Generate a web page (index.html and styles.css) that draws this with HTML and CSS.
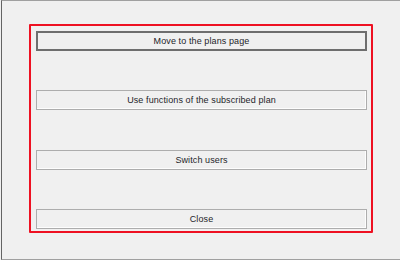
FILE: index.html
```html
<!DOCTYPE html>
<html lang="en">
  <head>
    <meta charset="UTF-8">
    <link rel="stylesheet" href="styles.css">
  </head>
  <body>
    <div class="window">
      <div class="panel">
        <button class="btn btn-default">Move to the plans page</button>
        <button class="btn">Use functions of the subscribed plan</button>
        <button class="btn">Switch users</button>
        <button class="btn">Close</button>
      </div>
    </div>
  </body>
</html>
```
FILE: styles.css
```css
html, body { margin: 0; padding: 0; background: #f0f0f0; }
body { font: 9px/1 "Liberation Sans", Arial, sans-serif; color: #1e1e2a; }
.window {
  box-sizing: border-box; height: 260px; margin-left: 1px;
  border-top: 1px solid #a0a0a0; border-bottom: 1px solid #a0a0a0;
  border-left: 1px solid #646464;
  padding: 23px 0 0 27px;
}
.panel {
  box-sizing: border-box; width: 344px; height: 209px;
  border: 2px solid #ee1122; border-radius: 1px;
  padding: 5px 3px 2px 5px;
  display: flex; flex-direction: column; justify-content: space-between;
}
.btn {
  box-sizing: border-box; height: 20px; width: 331px; padding: 1px 0 0;
  font: inherit; color: inherit; letter-spacing: 0.1px;
  background: #f0f0f0;
  border: 1px solid #adadad;
  box-shadow: inset -1px -1px 0 #fdfdfd;
}
.btn-default { border: 2px solid #6e6e6e; box-shadow: none; }
```
